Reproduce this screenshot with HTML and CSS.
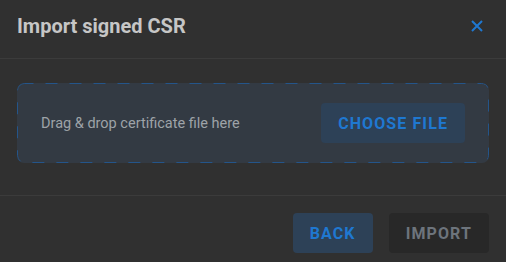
FILE: index.html
```html
<!DOCTYPE html>
<html lang="en">
<head>
    <meta charset="UTF-8">
    <meta name="viewport" content="width=device-width, initial-scale=1.0">
    <title>Import signed CSR</title>
    <link rel="stylesheet" href="styles.css">
</head>
<body>
    <div class="dialog">
        <div class="dialog-header">
            <h2 class="dialog-title">Import signed CSR</h2>
            <button class="close-btn" aria-label="Close">
                <svg width="12" height="12" viewBox="0 0 12 12">
                    <path d="M1 1 L11 11 M11 1 L1 11" stroke="#1f78d1" stroke-width="2" fill="none"/>
                </svg>
            </button>
        </div>
        <div class="dialog-content">
            <div class="dropzone">
                <span class="dropzone-text">Drag &amp; drop certificate file here</span>
                <button class="btn btn-primary">Choose file</button>
            </div>
        </div>
        <div class="dialog-footer">
            <button class="btn btn-primary">Back</button>
            <button class="btn btn-disabled" disabled>Import</button>
        </div>
    </div>
</body>
</html>
```

FILE: styles.css
```css
body {
    margin: 0;
    background-color: #303030;
    font-family: Roboto, "Liberation Sans", sans-serif;
    overflow: hidden;
}
.dialog {
    width: 506px;
    height: 262px;
    display: flex;
    flex-direction: column;
}
.dialog-header {
    display: flex;
    align-items: center;
    justify-content: space-between;
    padding: 0 17px;
    border-bottom: 1px solid #3b3b3b;
    box-sizing: border-box;
    height: 59px;
}
.dialog-title {
    margin: 0;
    font-size: 20px;
    font-weight: 700;
    color: #c6c6c6;
    margin-top: -6px;
}
.close-btn {
    background: none;
    border: none;
    padding: 0;
    width: 12px;
    height: 12px;
    margin-right: 6px;
    margin-top: -6px;
    cursor: pointer;
    display: flex;
}
.dialog-content {
    padding: 24px 17px 32px;
    border-bottom: 1px solid #3b3b3b;
}
/* dashed outline drawn as svg so the dashes get the long 12/12 rhythm */
.dropzone {
    height: 80px;
    box-sizing: border-box;
    display: flex;
    align-items: center;
    justify-content: space-between;
    padding: 0 24px;
    background-color: #333a43;
    background-image: url("data:image/svg+xml,%3Csvg xmlns='http://www.w3.org/2000/svg' width='472' height='80'%3E%3Crect x='0.5' y='0.5' width='471' height='79' rx='7' fill='none' stroke='%2324558a' stroke-width='1' stroke-dasharray='12 12' stroke-dashoffset='3'/%3E%3C/svg%3E");
    border-radius: 7px;
}
.dropzone-text {
    font-size: 14.5px;
    color: #9ea3a8;
}
.btn {
    height: 40px;
    padding: 0 17px;
    border: none;
    border-radius: 4px;
    font-family: Roboto, "Liberation Sans", sans-serif;
    font-size: 16px;
    font-weight: 700;
    letter-spacing: 1.1px;
    text-transform: uppercase;
    cursor: pointer;
}
.btn-primary {
    background-color: #2d4157;
    color: #1f78d1;
}
.btn-disabled {
    background-color: #282828;
    color: #6d747c;
    cursor: default;
}
.dialog-footer {
    flex: 1;
    display: flex;
    justify-content: flex-end;
    align-items: flex-start;
    gap: 16px;
    padding: 17px 17px 0;
}
```
